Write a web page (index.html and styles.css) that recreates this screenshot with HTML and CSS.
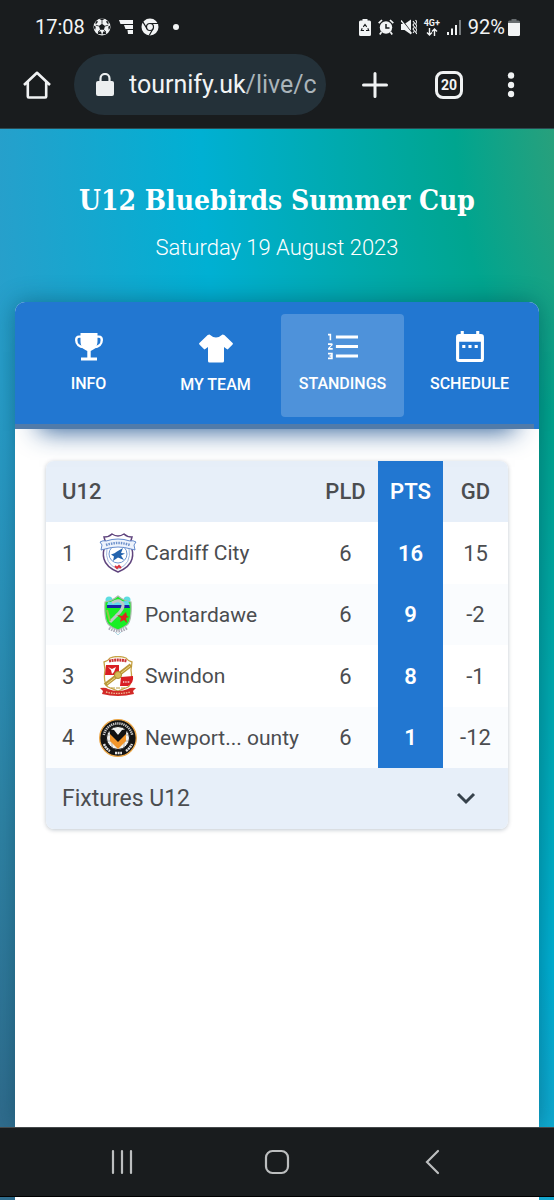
FILE: index.html
```html
<!DOCTYPE html>
<html lang="en">
<head>
<meta charset="utf-8">
<meta name="viewport" content="width=device-width, initial-scale=1">
<title>U12 Bluebirds Summer Cup</title>
<link rel="stylesheet" href="styles.css">
</head>
<body>
<div class="chrome">
  <div class="status">
    <span>17:08</span>
    <svg class="st-ball" width="18" height="18" viewBox="0 0 18 18"><circle cx="9" cy="9" r="8.5" fill="#f2f4f5"/><g fill="#191c1e"><path d="M9 5.800l3.100 2.300-1.200 3.600H7.100L5.900 8.100z"/><path d="M6.500 1L9 2.600 11.500 1 9 .4zM.8 7.500l2 1.300-.6 3.200-1-1.500zM17.200 7.500l-2 1.300.6 3.200 1-1.500zM4.800 15.900l.6-2.400 2.600 0 .8 2.800zM13.200 15.900l-.6-2.400-2.300 0-.8 2.800zM2 5.500l1.500-2.500 1.600.5-1.500 2.300zM16 5.500l-1.500-2.500-1.600.5 1.500 2.300z"/></g><path d="M9 5.800V2.500M12.100 8.100l3.200-1M10.900 11.700l2 2.400M7.100 11.700l-2 2.400M5.900 8.100l-3.200-1" stroke="#191c1e" stroke-width=".8"/></svg>
    <svg class="st-flag" width="14" height="14" viewBox="0 0 14 14" fill="#f2f4f5"><path d="M0 0h14v4H1.500zM5 5h9v4H6.500zM8.500 10H14v4h-5z"/></svg>
    <svg class="st-chrome" width="18" height="18" viewBox="0 0 18 18"><circle cx="9" cy="9" r="8.500" fill="#f2f4f5"/><g fill="none" stroke="#191c1e" stroke-width="1.200"><circle cx="9" cy="9" r="3.500"/><path d="M9 5.500h8M6 10.800L2 4.100M12 10.800L8.200 17.500"/></g></svg>
    <svg width="6" height="6" viewBox="0 0 6 6"><circle cx="3" cy="3" r="3" fill="#f2f4f5"/></svg>
    <div class="status-right">
      <svg width="12" height="17" viewBox="0 0 12 17"><path d="M3.500 0h5v1.500h2A1.500 1.500 0 0 1 12 3v12.500a1.500 1.500 0 0 1-1.500 1.500h-9A1.500 1.500 0 0 1 0 15.500V3a1.500 1.500 0 0 1 1.500-1.500h2z" fill="#f2f4f5"/><path d="M4.300 7.800L6 5.500l1.700 2.300M8.800 9.300l.9 2.200H7M5 11.500H2.300l.9-2.200" fill="none" stroke="#191c1e" stroke-width="1.100"/></svg>
      <svg width="16" height="16" viewBox="0 0 16 16"><circle cx="8" cy="8.500" r="6.200" fill="#f2f4f5"/><path d="M.7 4.200L4 1M15.300 4.200L12 1M3.500 13l-1.700 2.500M12.500 13l1.700 2.500" stroke="#f2f4f5" stroke-width="1.700"/><path d="M8 5v4h3.500" fill="none" stroke="#191c1e" stroke-width="1.500"/></svg>
      <svg width="16" height="16" viewBox="0 0 16 16"><path d="M0 5h3.500L10 .5v15L3.500 11H0z" fill="#f2f4f5"/><path d="M1 1l10 13" stroke="#191c1e" stroke-width="1.200"/><path d="M0 1.500l10.500 13" stroke="#f2f4f5" stroke-width="1.300"/><path d="M12 2l1.500 2L12 6l1.500 2L12 10l1.500 2-1.500 2M14.500 1L16 3l-1.500 2L16 7l-1.500 2L16 11l-1.500 2 1.500 2" fill="none" stroke="#f2f4f5" stroke-width="1.100"/></svg>
      <span class="net"><span>4G+</span><svg width="12" height="8" viewBox="0 0 12 8" fill="none" stroke="#f2f4f5" stroke-width="1.400"><path d="M3.500 0v7M1 4.500L3.500 7 6 4.500M8.500 8V1M6 3.500L8.500 1 11 3.500"/></svg></span>
      <svg width="14" height="15" viewBox="0 0 14 15"><path d="M0 12h2v3H0zM4 8.500h2V15H4zM8 5h2v10H8z" fill="#f2f4f5"/><path d="M12 0h2v15h-2z" fill="#74797c"/></svg>
      <span class="battery">92%<svg width="12" height="17" viewBox="0 0 12 17"><path d="M3.500 0h5v1.500h2A1.500 1.500 0 0 1 12 3v2H0V3a1.500 1.500 0 0 1 1.500-1.500h2z" fill="#686d70"/><path d="M0 4h12v11.500a1.500 1.500 0 0 1-1.500 1.500h-9A1.500 1.500 0 0 1 0 15.500z" fill="#f2f4f5"/></svg></span>
    </div>
  </div>
  <div class="toolbar">
    <button class="tool" aria-label="Home"><svg width="28" height="28" viewBox="0 0 28 28" fill="none" stroke="#f0f2f3" stroke-width="2.600"><path d="M1 14L14 1.800 27 14M4.800 11v14.500q0 1 1 1h16.400q1 0 1-1V11" stroke-linejoin="round"/></svg></button>
    <button class="url"><svg width="18" height="23" viewBox="0 0 18 23"><path d="M4.500 9V5.500a4.500 4.500 0 0 1 9 0V9" fill="none" stroke="#eceff0" stroke-width="2.200"/><rect y="8" width="18" height="15" rx="2" fill="#eceff0"/></svg><span class="address">tournify.uk<span class="path">/live/c</span></span></button>
    <button class="tool" aria-label="New tab"><svg width="28" height="28" viewBox="0 0 28 28"><path d="M14 2.500v23M2.500 14h23" stroke="#f0f2f3" stroke-width="3" stroke-linecap="round"/></svg></button>
    <button class="tool tabs-count" aria-label="20 open tabs">20</button>
    <button class="tool" aria-label="More"><svg width="28" height="28" viewBox="0 0 28 28" fill="#f0f2f3"><circle cx="14" cy="4.500" r="3.200"/><circle cx="14" cy="14" r="3.200"/><circle cx="14" cy="23" r="3.200"/></svg></button>
  </div>
</div>

<main class="page">
  <header class="event">
    <h1>U12 Bluebirds Summer Cup</h1>
    <p>Saturday 19 August 2023</p>
  </header>
  <section class="panel">
    <nav class="tabs">
      <a class="tab" href="#info"><svg width="28" height="31" viewBox="0 0 28 31"><path d="M5.500 2h17v8c0 5.500-3 8.500-6.800 10v6.500h6.300v3H6v-3h6.300V20C8.500 18.500 5.500 15.500 5.500 10z" fill="#fff"/><path d="M7 5.600H4Q1.200 5.600 1.200 9c0 4 3 7 7.800 7.200M21 5.600h3q2.800 0 2.800 3.400c0 4-3 7-7.800 7.200" fill="none" stroke="#fff" stroke-width="2.400"/></svg>INFO</a>
      <a class="tab" href="#team"><svg width="34" height="32" viewBox="0 1 34 32"><path d="M10.500 4.500Q17 10.500 23.500 4.500l1.800.6L33.600 13q.6.700 0 1.400l-4.500 4.700q-.7.700-1.400 0L25 17v14q0 1.500-1.500 1.500h-13Q9 32.500 9 31V17l-2.700 2.100q-.7.700-1.400 0L.4 14.400q-.6-.7 0-1.400l8.300-7.900z" fill="#fff"/></svg>MY TEAM</a>
      <a class="tab active" href="#standings" aria-current="page"><svg width="30" height="31" viewBox="2 2.200 19 19.600" fill="#fff"><path d="M7,13V11H21V13H7M7,19V17H21V19H7M7,7V5H21V7H7M3,8V5H2V4H4V8H3M2,17V16H5V20H2V19H4V18.500H3V17.500H4V17H2M4.250,10A.75,.75 0 0,1 5,10.750C5,10.950 4.920,11.140 4.790,11.270L3.120,13H5V14H2V13.080L4,11H2V10H4.250Z"/></svg>STANDINGS</a>
      <a class="tab" href="#schedule"><svg width="28" height="31" viewBox="3 1 18 20" fill="#fff"><path d="M9,10V12H7V10H9M13,10V12H11V10H13M17,10V12H15V10H17M19,3A2,2 0 0,1 21,5V19A2,2 0 0,1 19,21H5C3.890,21 3,20.100 3,19V5A2,2 0 0,1 5,3H6V1H8V3H16V1H18V3H19M19,19V8H5V19H19Z"/></svg>SCHEDULE</a>
    </nav>
    <div class="content">
      <div class="card">
        <table>
          <thead><tr><th class="group" colspan="3" scope="col">U12</th><th class="num" scope="col">PLD</th><th class="num pts" scope="col">PTS</th><th class="num" scope="col">GD</th></tr></thead>
          <tbody>
            <tr><td class="rank">1</td><td class="crest"><svg width="38" height="40" viewBox="0 0 38 40"><path d="M5 4q5 0 8-3 6 4 12 0 3 3 8 3l-2 7q4 8 2 15-2 8-14 13Q7 34 5 26q-2-7 2-15z" fill="#fff" stroke="#60457e" stroke-width="1.500"/><path d="M8 15q-3 16 11 21 14-5 11-21" fill="none" stroke="#a3b9e0"/><circle cx="19" cy="21" r="9" fill="#fff" stroke="#6f96d0"/><path d="M1 9q3-2 6-1 12-4 24 0 3-1 6 1l-2 3 1 5-4-1q-13-4-26 0l-4 1 1-5z" fill="#edf3fc" stroke="#557fc6" stroke-width=".9"/><path d="M7 12q12-4 24 0" fill="none" stroke="#6e91cb" stroke-width="2.500" stroke-dasharray="1.500 1"/><path d="M12 21.500q4-1 6-3l6-3.500-2 5 4 .5-4 2 3 4.500-6-2.500-5 3.500 1-4.500z" fill="#2463ad"/><path d="M16 33l2 2 2-2 2 2" fill="none" stroke="#d8333d" stroke-width="2"/></svg></td><td class="team">Cardiff City</td><td class="num">6</td><td class="num pts">16</td><td class="num">15</td></tr>
            <tr><td class="rank">2</td><td class="crest"><svg width="38" height="40" viewBox="0 0 38 40"><circle cx="10" cy="5" r="3.500" fill="#5cdde0"/><circle cx="28" cy="5" r="3.500" fill="#5cdde0"/><path d="M6 7q7-1 13-6 6 5 13 6 1 19-4 23-4 3-9 5-6-2-9-5Q5 26 6 7z" fill="#18ef25" stroke="#abb9ae" stroke-width="1.200"/><path d="M9 7l20-1 2 4H8z" fill="#62d8ed"/><path d="M8 10h22l1 3H8z" fill="#1525a5"/><path d="M13 8q7-5 11 1 1 5-7 12l-6 6" fill="none" stroke="#bdc9c6" stroke-width="3"/><path d="M8 15l3 11" stroke="#8ec64b" stroke-width="2"/><path d="M18 20l5 1 4-4 1 4 2 1-3 1 1 5-3-3-4 2 1-4z" fill="#d82720"/><path d="M10 33q9 6 18 0" fill="none" stroke="#aaaab6" stroke-width="3" stroke-dasharray="1.500 1"/><path d="M16 37l3 3 3-3" fill="none" stroke="#b2dbe5"/></svg></td><td class="team">Pontardawe</td><td class="num">6</td><td class="num pts">9</td><td class="num">-2</td></tr>
            <tr><td class="rank">3</td><td class="crest"><svg width="38" height="40" viewBox="0 0 38 40"><path d="M5 6q4-1 6-4 8-3 16 0 2 3 6 4l-1 8q2 13-3 17l-10 4-10-4q-5-4-3-17z" fill="#fff" stroke="#c6a345" stroke-width="1.300"/><path d="M10 5q9-2 18 0" fill="none" stroke="#cc3435" stroke-width="3" stroke-dasharray="2 .6"/><path d="M7 9h13v10H6zM22 21l12-1q1 7-5 10h-8z" fill="#d91e23"/><path d="M9 11l4 2 4-2-2 5-2 2-1-4z" fill="#fff"/><path d="M6 29L32 9" stroke="#b99639" stroke-width="4"/><path d="M8 28L31 10" stroke="#edda83" stroke-width="1"/><circle cx="19" cy="19" r="3.500" fill="#d7bc58" stroke="#a98a2d"/><path d="M24 26h7" stroke="#efabab" stroke-width="2" stroke-dasharray="1 .7"/><path d="M1 32q6-1 8 1 10 4 20 0 2-2 8-1l-3 3 1 3q-16 4-32 0l1-3z" fill="#d22a27"/><path d="M7 36q12 3 24 0" fill="none" stroke="#edbd95" stroke-width="1.300" stroke-dasharray="1.500 1"/><path d="M12 32h14" stroke="#bc9b3b" stroke-dasharray="4 1"/></svg></td><td class="team">Swindon</td><td class="num">6</td><td class="num pts">8</td><td class="num">-1</td></tr>
            <tr><td class="rank">4</td><td class="crest"><svg width="38" height="40" viewBox="0 0 38 40"><circle cx="19" cy="20" r="18.300" fill="#141414" stroke="#eda849" stroke-width="1.300"/><path d="M4.800 17a14.500 14.500 0 0 1 28.400 0" fill="none" stroke="#c9c9c9" stroke-width="2.500" stroke-dasharray="1.300 .8"/><path d="M5 26q2 5 6 7M16 35h7M27 33q4-3 6-7" fill="none" stroke="#e2e2e2" stroke-width="2.500" stroke-dasharray="2 .6"/><circle cx="19" cy="20" r="11.500" fill="#f1f1ee" stroke="#141414"/><path d="M9 17h20M9 23h20M13 12v17M25 12v17" stroke="#a7a7a2" stroke-width=".9"/><path d="M11 15l8 8 8-8v8l-8 8-8-8z" fill="#f2962b"/><path d="M10 11l5 1 4 5 4-5 5-1-1 5-8 8-8-8z" fill="#111"/></svg></td><td class="team">Newport... ounty</td><td class="num">6</td><td class="num pts">1</td><td class="num">-12</td></tr>
          </tbody>
        </table>
        <button class="fixtures">Fixtures U12<svg width="20" height="13" viewBox="0 0 20 13"><path d="M2 2l8 8 8-8" fill="none" stroke="#37424c" stroke-width="3"/></svg></button>
      </div>
    </div>
  </section>
</main>

<div class="navbar">
  <button class="navkey" aria-label="Recent apps"><svg width="24" height="26" viewBox="0 0 24 26"><path d="M3 2v22M12 2v22M21 2v22" stroke="#bcbebf" stroke-width="2.200" stroke-linecap="round"/></svg></button>
  <button class="navkey" aria-label="Home"><svg width="26" height="26" viewBox="0 0 26 26"><rect x="2" y="2" width="22" height="22" rx="6.500" fill="none" stroke="#bcbebf" stroke-width="2.200"/></svg></button>
  <button class="navkey" aria-label="Back"><svg width="16" height="26" viewBox="0 0 16 26"><path d="M14 2L3 13l11 11" fill="none" stroke="#bcbebf" stroke-width="2.200" stroke-linecap="round"/></svg></button>
</div>
<div class="page-edge"></div>
</body>
</html>
```
FILE: styles.css
```css
* { box-sizing: border-box; }

body {
  margin: 0;
  min-height: 100vh;
  display: flex;
  flex-direction: column;
  font-family: Roboto, "Liberation Sans", sans-serif;
  font-size: 22px;
  color: #4b4d50;
  background: radial-gradient(148% 137% at 116% 8%, #3c9a70 0%, #28a07c 11%, #00a58f 23%, #00b0d3 54%, #289fcb 80%, #2f86a8 89%, #306d8e 100%);
}

button { border: 0; padding: 0; background: none; font: inherit; color: inherit; }
svg { display: block; flex: none; }

.chrome, .navbar { background: #191c1e; color: #f2f4f5; }
.chrome { height: 129px; border-bottom: 1px solid #2c4a52; }

.status {
  display: flex;
  align-items: center;
  height: 54px;
  padding: 0 34px 0 35px;
  font-size: 20px;
}
.st-ball { margin-left: 8px; }
.st-flag { margin-left: 8px; }
.st-chrome { margin: 0 14px 0 8px; }
.status-right { display: flex; align-items: center; gap: 7px; margin-left: auto; }
.net { display: flex; flex-direction: column; align-items: center; font-size: 9px; line-height: 9px; font-weight: 700; }
.battery { display: flex; align-items: center; gap: 3px; }

.toolbar { display: flex; align-items: center; padding: 0 29px 0 23px; }
.tool { width: 28px; height: 28px; flex: none; }
.url {
  flex: 1;
  min-width: 0;
  height: 61px;
  margin: 0 35px 0 23px;
  padding: 0 10px 0 22px;
  display: flex;
  align-items: center;
  gap: 15px;
  border-radius: 31px;
  background: #243139;
  font-size: 25px;
}
.address { overflow: hidden; white-space: nowrap; }
.path { color: #aab4ba; }
.tabs-count {
  margin: 0 34px 0 46px;
  border: 3px solid #f0f2f3;
  border-radius: 8px;
  font-size: 14px;
  line-height: 20px;
  font-weight: 700;
}

.page { flex: 1; display: flex; flex-direction: column; padding: 0 15px; }
.event { padding: 52px 0 40px; text-align: center; color: #fff; }
.event h1 {
  margin: 0 0 12px;
  font: 700 28px/40px "Roboto Slab", "DejaVu Serif Condensed", "DejaVu Serif", serif;
  white-space: nowrap;
}
.event p { margin: 0; font-weight: 300; line-height: 29px; }

.panel {
  flex: 1;
  border-radius: 10px 10px 0 0;
  background: #fff;
  box-shadow: 0 0 24px rgba(0, 40, 60, 0.4);
}
.tabs {
  position: relative;
  display: flex;
  gap: 4px;
  padding: 12px 8px 12px 12px;
  border-radius: 10px 10px 0 0;
  background: #2277d1;
  box-shadow: 0 26px 24px -24px rgba(20, 75, 140, 0.9);
}
.tabs::after {
  content: "";
  position: absolute;
  left: 0;
  right: 5px;
  bottom: 0;
  height: 5px;
  background: #517ba9;
}
.tab {
  flex: 1;
  min-height: 103px;
  padding-top: 17px;
  display: flex;
  flex-direction: column;
  align-items: center;
  gap: 11px;
  border-radius: 4px;
  color: #fff;
  font-size: 16px;
  line-height: 22px;
  font-weight: 500;
  text-decoration: none;
}
.active { background: #4e92da; }

.content { padding: 32px 31px; }
.card { border-radius: 8px; overflow: hidden; background: #fff; box-shadow: 0 1px 4px rgba(0, 30, 60, 0.25); }
table { width: 100%; border-collapse: collapse; table-layout: auto; }
th, td { height: 61px; padding: 0; font-weight: 400; text-align: left; }
tbody tr:nth-child(odd) td { height: 62px; }
th { background: #e7eff9; font-weight: 500; }
.group { padding-left: 16px; }
.rank { width: 49px; padding-left: 16px; }
.crest { width: 50px; padding-left: 4px; }
.team { font-size: 21px; white-space: nowrap; }
.num { width: 65px; text-align: center; }
tbody tr:nth-child(even) { background: #fafcfe; }
.pts { background: #2277d1; color: #fff; font-weight: 600; }
.fixtures {
  display: flex;
  align-items: center;
  justify-content: space-between;
  width: 100%;
  height: 61px;
  padding: 0 32px 0 16px;
  background: #e7eff9;
  font-size: 23px;
}

.navbar {
  display: flex;
  justify-content: space-around;
  align-items: center;
  height: 70px;
  padding: 0 44px;
  border-top: 1px solid #45494b;
  border-bottom: 1px solid #000;
}
.navkey { width: 60px; height: 60px; display: flex; align-items: center; justify-content: center; }
.page-edge { height: 3px; margin: 0 15px; background: #fff; }
```
